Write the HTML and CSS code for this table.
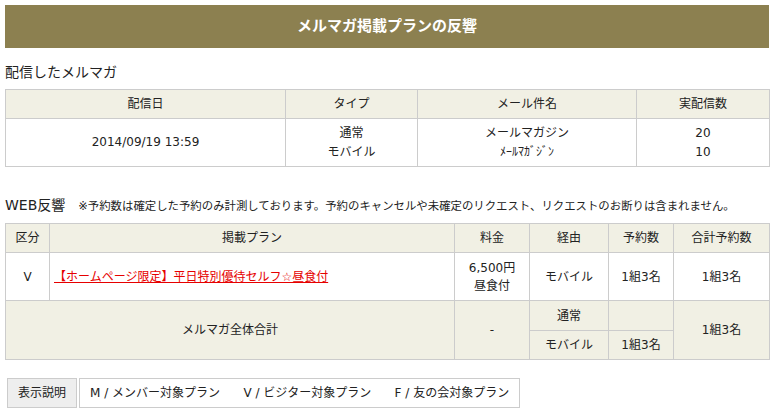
FILE: index.html
```html
<!DOCTYPE html>
<html lang="ja">
<head>
    <meta charset="UTF-8">
    <title>メルマガ掲載プランの反響</title>
    <link rel="stylesheet" href="styles.css">
</head>
<body>
    <div class="page">
        <h1 class="page-title">メルマガ掲載プランの反響</h1>

        <!-- 配信したメルマガ -->
        <h2 class="section-title">配信したメルマガ</h2>
        <table class="list">
            <colgroup>
                <col style="width: 280px">
                <col style="width: 132px">
                <col style="width: 219px">
                <col style="width: 133px">
            </colgroup>
            <tr>
                <th>配信日</th>
                <th>タイプ</th>
                <th>メール件名</th>
                <th>実配信数</th>
            </tr>
            <tr class="tall">
                <td>2014/09/19 13:59</td>
                <td>通常<br>モバイル</td>
                <td>メールマガジン<br>ﾒｰﾙﾏｶﾞｼﾞﾝ</td>
                <td>20<br>10</td>
            </tr>
        </table>

        <!-- WEB反響 -->
        <h2 class="section-title web">WEB反響<span class="note">※予約数は確定した予約のみ計測しております。予約のキャンセルや未確定のリクエスト、リクエストのお断りは含まれません。</span></h2>
        <table class="list">
            <colgroup>
                <col style="width: 44px">
                <col style="width: 405px">
                <col style="width: 75px">
                <col style="width: 79px">
                <col style="width: 65px">
                <col style="width: 96px">
            </colgroup>
            <tr>
                <th>区分</th>
                <th>掲載プラン</th>
                <th>料金</th>
                <th>経由</th>
                <th>予約数</th>
                <th>合計予約数</th>
            </tr>
            <tr class="plan-row">
                <td>V</td>
                <td class="plan"><a href="#">【ホームページ限定】平日特別優待セルフ☆昼食付</a></td>
                <td>6,500円<br>昼食付</td>
                <td>モバイル</td>
                <td>1組3名</td>
                <td>1組3名</td>
            </tr>
            <tr class="total">
                <td colspan="2" rowspan="2">メルマガ全体合計</td>
                <td rowspan="2">-</td>
                <td class="upper">通常</td>
                <td class="upper"></td>
                <td rowspan="2">1組3名</td>
            </tr>
            <tr class="total">
                <td>モバイル</td>
                <td>1組3名</td>
            </tr>
        </table>

        <!-- 表示説明 -->
        <table class="legend">
            <tr>
                <th>表示説明</th>
                <td>M / メンバー対象プラン　   V / ビジター対象プラン　   F / 友の会対象プラン</td>
            </tr>
        </table>
    </div>
</body>
</html>
```

FILE: styles.css
```css
* {
    margin: 0;
    padding: 0;
    box-sizing: border-box;
    font-family: "DejaVu Sans", "Noto Sans CJK JP", sans-serif;
}

body {
    background-color: #fff;
    color: #222;
}

.page {
    width: 764px;
    margin: 5px;
}

.page-title {
    height: 43px;
    line-height: 43px;
    background-color: #8c8050;
    color: #fff;
    font-size: 15px;
    font-weight: bold;
    text-align: center;
}

.section-title {
    margin: 14px 0 7px;
    font-size: 14px;
    font-weight: normal;
    line-height: 20px;
}

.section-title.web {
    margin: 28px 0 7px;
}

.note {
    margin-left: 13px;
    font-size: 11.4px;
}

.list {
    width: 764px;
    table-layout: fixed;
    border-collapse: collapse;
}

.list th,
.list td {
    border: 1px solid #ccc;
    padding: 5px 4px;
    font-size: 12px;
    font-weight: normal;
    line-height: 18px;
    text-align: center;
    vertical-align: middle;
}

.list th {
    background-color: #f1f0e4;
}

.list tr.tall td {
    line-height: 18.5px;
}

.list tr.plan-row td {
    padding: 6px 4px 5px;
}

.list td.plan {
    text-align: left;
}

.plan a {
    color: #e60000;
}

.list tr.total td {
    background-color: #f1f0e4;
}

.list tr.total td.upper {
    padding: 6px 4px 5px;
}

.legend {
    margin-top: 16px;
    border-spacing: 2px;
}

.legend th,
.legend td {
    border: 1px solid #ccc;
    padding: 5px 10px;
    font-size: 12px;
    font-weight: normal;
    line-height: 18px;
    white-space: pre;
}

.legend th {
    background-color: #eee;
}
```
